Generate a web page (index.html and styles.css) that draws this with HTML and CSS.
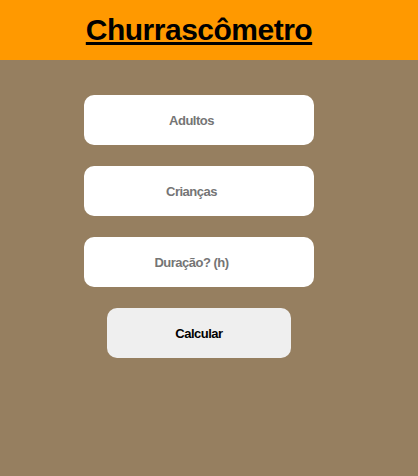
FILE: index.html
```html
<!DOCTYPE html>
<html lang="pt">
<head>
<meta charset="utf-8">
<link rel="stylesheet" href="styles.css">
</head>
<body>
<header class="topo"><h1 class="titulo">Churrascômetro</h1></header>
<main class="conteudo">
  <input class="campo" type="number" placeholder="Adultos">
  <input class="campo" type="number" placeholder="Crianças">
  <input class="campo" type="number" placeholder="Duração? (h)">
  <button class="botao">Calcular</button>
</main>
</body>
</html>
```
FILE: styles.css
```css
html, body { margin: 0; padding: 0; }
body {
  background: #967f60;
  font-family: "Liberation Sans", Arial, sans-serif;
  min-height: 476px;
}
.topo {
  background: #ff9900;
  height: 60px;
  display: flex;
  align-items: center;
  justify-content: center;
  padding-right: 20px;
}
.titulo {
  margin: 0;
  font-size: 30px;
  letter-spacing: -0.5px;
  font-weight: bold;
  text-decoration: underline;
  text-decoration-thickness: 3px;
  color: #000;
}
.conteudo {
  display: flex;
  flex-direction: column;
  align-items: center;
  padding: 35px 20px 0 0;
  gap: 21px;
}
.campo {
  box-sizing: border-box;
  width: 230px;
  height: 50px;
  border: none;
  border-radius: 10px;
  background: #fff;
  text-align: center;
  font-family: inherit;
  font-weight: bold;
  font-size: 13px;
  letter-spacing: -0.5px;
  outline: none;
}
.campo::placeholder { color: #757575; }
.botao {
  box-sizing: border-box;
  width: 184px;
  height: 50px;
  border: none;
  border-radius: 10px;
  background: #efefef;
  font-family: inherit;
  font-weight: bold;
  font-size: 13px;
  letter-spacing: -0.5px;
  color: #000;
}
```
